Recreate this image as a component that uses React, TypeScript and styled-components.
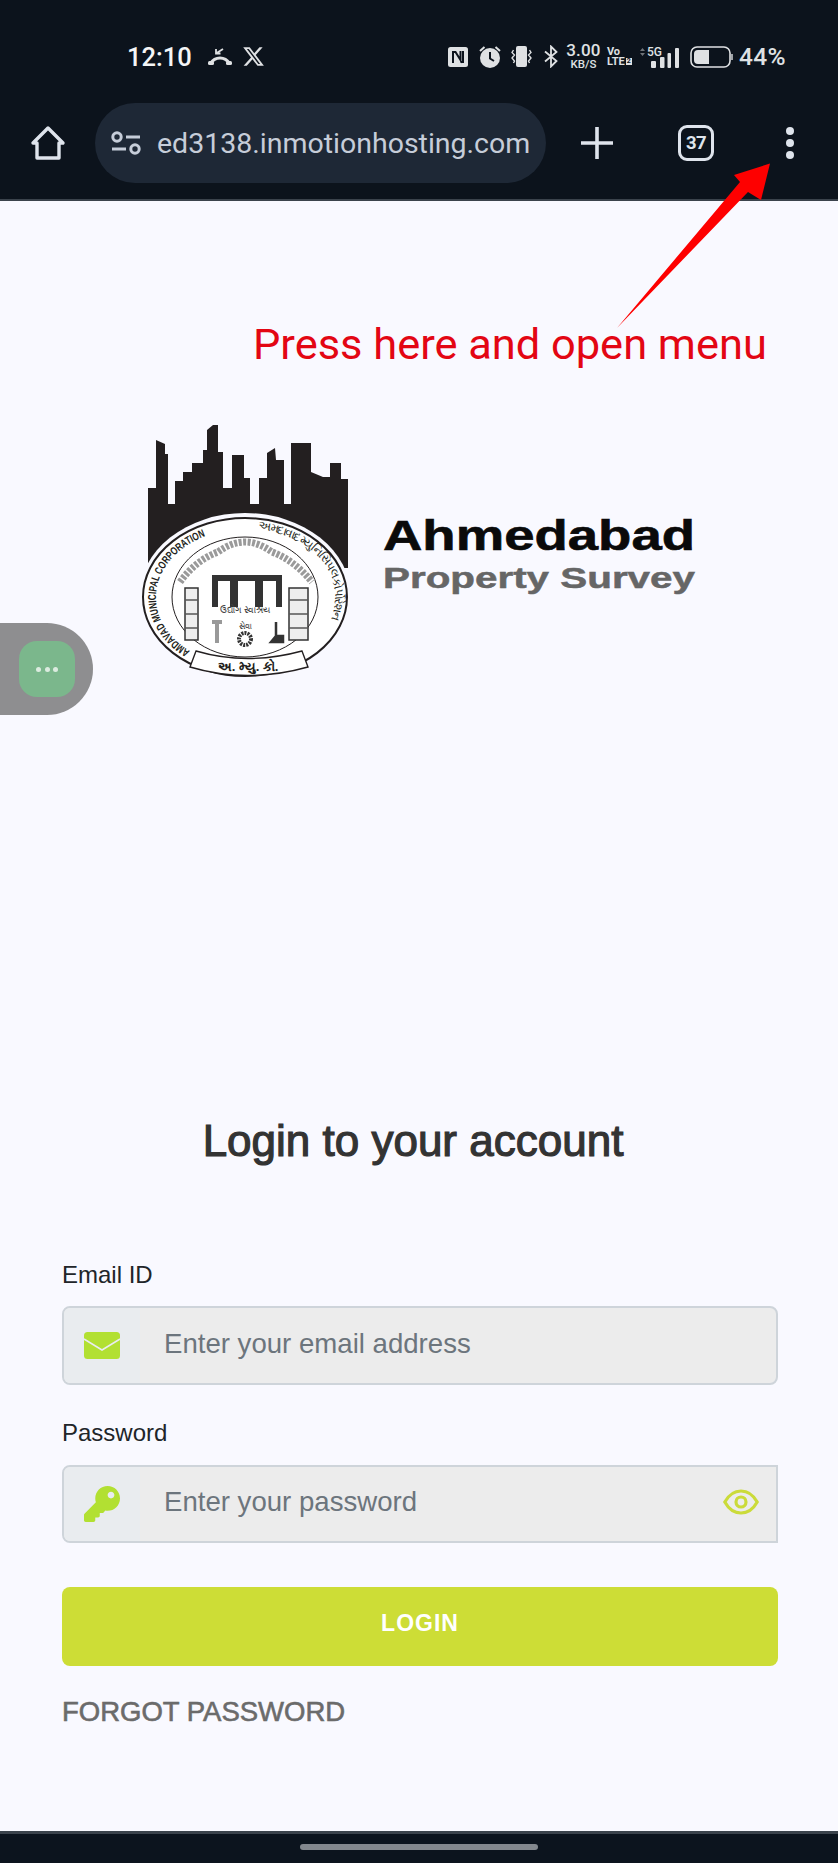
import React from "react";
import styled, { createGlobalStyle } from "styled-components";
import { FaKey } from "react-icons/fa";
import { FaXTwitter } from "react-icons/fa6";

const GlobalStyle = createGlobalStyle`
  html, body { margin: 0; padding: 0; background: #f9f9ff; }
  * { box-sizing: border-box; }
  input::placeholder { color: #6c757d; opacity: 1; }
`;

const Screen = styled.div`
  position: relative;
  width: 838px;
  height: 1863px;
  display: flex;
  flex-direction: column;
  overflow: hidden;
  background: #f9f9ff;
  font-family: "Liberation Sans", Arial, sans-serif;
`;

/* browser chrome */
const Chrome = styled.header`
  height: 201px;
  flex: none;
  background: #0c131c;
  border-bottom: 2px solid #3b434c;
  font-family: Roboto, sans-serif;
`;

const StatusBar = styled.div`
  height: 103px;
  padding: 10px 52px 0 127px;
  display: flex;
  align-items: center;
  justify-content: space-between;
  color: #fff;
`;

const StatusGroup = styled.div`
  display: flex;
  align-items: center;
`;

const Clock = styled.span`
  font-size: 25.5px;
  font-weight: 500;
  color: #f4f5f6;
`;

const StatusSlot = styled.span<{ $left: number }>`
  display: flex;
  margin-left: ${(p) => p.$left}px;
  color: #dfe1e3;
`;

const Speed = styled.span`
  width: 33px;
  display: flex;
  flex-direction: column;
  align-items: center;
  font-weight: 500;
  line-height: 1;
  .value { font-size: 17px; letter-spacing: 0.2px; }
  .unit { font-size: 11.5px; }
`;

const Volte = styled.span`
  width: 24px;
  display: flex;
  flex-direction: column;
  font-size: 11px;
  font-weight: 700;
  line-height: 10px;
  .row { display: flex; align-items: center; gap: 1px; }
  .sim { font-size: 7px; line-height: 7px; padding: 0 1px; background: #dfe1e3; color: #0c131c; }
`;

const Percent = styled.span`
  font-size: 24.5px;
  font-weight: 500;
  letter-spacing: 0.4px;
  color: #dfe1e3;
`;

const Toolbar = styled.div`
  height: 80px;
  padding-left: 30px;
  display: flex;
  align-items: center;
  color: #dfe4ec;
`;

const ToolSlot = styled.span<{ $left: number }>`
  display: flex;
  margin-left: ${(p) => p.$left}px;
`;

const AddressPill = styled.div`
  width: 451px;
  height: 80px;
  margin-left: 29px;
  padding-left: 16px;
  display: flex;
  align-items: center;
  gap: 16px;
  border-radius: 40px;
  background: #1e2836;
  color: #c6cdd9;
  font-size: 28.5px;
`;

const TabCount = styled.span`
  width: 36px;
  height: 36px;
  margin-left: 65px;
  display: flex;
  align-items: center;
  justify-content: center;
  border: 3.5px solid #dfe4ec;
  border-radius: 9px;
  font-size: 18.5px;
  font-weight: 700;
  letter-spacing: -0.6px;
`;

/* overlays */
const PointerArrow = styled.svg`
  position: absolute;
  left: 600px;
  top: 150px;
`;

const FloatingDock = styled.div`
  position: absolute;
  left: 0;
  top: 623px;
  width: 93px;
  height: 92px;
  display: flex;
  align-items: center;
  padding-left: 19px;
  border-radius: 0 46px 46px 0;
  background: #8e8e90;
`;

const DockButton = styled.div`
  width: 56px;
  height: 56px;
  display: flex;
  align-items: center;
  justify-content: center;
  gap: 3.5px;
  border-radius: 18px;
  background: #7bb78c;
`;

const DockDot = styled.span`
  width: 5px;
  height: 5px;
  border-radius: 50%;
  background: #dcebe0;
`;

/* page */
const Main = styled.main`
  flex: 1;
  padding: 120px 60px 0 62px;
  display: flex;
  flex-direction: column;
`;

const Notice = styled.div`
  width: 100%;
  padding-left: 191px;
  font-family: Roboto, sans-serif;
  font-size: 43.4px;
  line-height: 48px;
  color: #e30613;
  white-space: nowrap;
`;

const LogoArt = styled.svg`
  display: block;
  flex: none;
  margin: 41px 0 0 68px;
`;

const Title = styled.h1`
  margin: 426px 14px 0 0;
  text-align: center;
  font-size: 44px;
  line-height: 50px;
  font-weight: 400;
  color: #333;
  -webkit-text-stroke: 1.2px #333;
`;

const Label = styled.label<{ $top: number }>`
  display: block;
  margin-top: ${(p) => p.$top}px;
  font-size: 24px;
  line-height: 28px;
  color: #212529;
`;

const InputGroup = styled.div<{ $top: number; $height: number; $square?: boolean }>`
  height: ${(p) => p.$height}px;
  margin-top: ${(p) => p.$top}px;
  display: flex;
  align-items: stretch;
  overflow: hidden;
  background: #ececec;
  border: 2px solid #ced4da;
  border-radius: ${(p) => (p.$square ? "8px 0 0 8px" : "8px")};
`;

const Addon = styled.span`
  width: 76px;
  flex: none;
  display: flex;
  align-items: center;
  justify-content: center;
  background: #e9ecef;
  color: #b2e032;
`;

const Field = styled.input`
  flex: 1;
  min-width: 0;
  padding: 0 0 4px 24px;
  border: 0;
  outline: 0;
  background: transparent;
  font-family: "Liberation Sans", Arial, sans-serif;
  font-size: 27.6px;
  color: #212529;
`;

const EyeToggle = styled.span`
  flex: none;
  display: flex;
  align-items: center;
  padding: 0 17px 4px 0;
  color: #cbdb3a;
`;

const LoginButton = styled.button`
  height: 79px;
  margin-top: 44px;
  padding: 0 0 6px;
  border: 0;
  border-radius: 8px;
  background: #cddd36;
  color: #fff;
  font-family: "Liberation Sans", Arial, sans-serif;
  font-size: 23px;
  font-weight: 700;
  letter-spacing: 1px;
`;

const ForgotLink = styled.a`
  margin-top: 31px;
  font-size: 27.5px;
  line-height: 30px;
  color: #6b6b6b;
  -webkit-text-stroke: 0.6px #6b6b6b;
`;

const BottomBar = styled.footer`
  height: 32px;
  flex: none;
  display: flex;
  justify-content: center;
  padding-top: 10px;
  background: #0c141e;
  border-top: 3px solid #3b434c;
`;

const HomeHandle = styled.span`
  width: 238px;
  height: 6px;
  border-radius: 3px;
  background: #83888e;
`;

const MissedCall = () => (
  <svg width="24" height="18" viewBox="0 0 24 18" fill="none">
    <path d="M2.5 15.5C5 11.5 8 10 12 10s7 1.500 9.500 5.500" stroke="currentColor" strokeWidth="3" />
    <rect x="0" y="13" width="6" height="4" rx="1.500" fill="currentColor" />
    <rect x="18" y="13" width="6" height="4" rx="1.500" fill="currentColor" />
    <path d="M8 1v4.500h4.500M8.300 5.300 15 1" stroke="currentColor" strokeWidth="1.800" />
  </svg>
);

const NfcIcon = () => (
  <svg width="20" height="20" viewBox="0 0 20 20">
    <rect width="20" height="20" rx="2.500" fill="currentColor" />
    <path d="M5 16V5h2.500l5 8V4" fill="none" stroke="#0c131c" strokeWidth="2" />
    <path d="M15 4v11h-2.500" fill="none" stroke="#0c131c" strokeWidth="2" />
  </svg>
);

const AlarmIcon = () => (
  <svg width="22" height="23" viewBox="0 0 22 23">
    <circle cx="11" cy="13" r="10" fill="currentColor" />
    <path d="M11 7v6.500l4 2.500" fill="none" stroke="#0c131c" strokeWidth="2" />
    <path d="M1 6l4.500-4M21 6l-4.500-4" fill="none" stroke="currentColor" strokeWidth="2" />
  </svg>
);

const VibrateIcon = () => (
  <svg width="21" height="21" viewBox="0 0 21 21">
    <rect x="5" y="0" width="11" height="21" rx="2" fill="currentColor" />
    <path d="M2.500 4 1 6.500l2.500 2.500L1 12l2.500 3-1 2M18.500 4 20 6.500 17.500 9 20 12l-2.500 3 1 2" fill="none" stroke="currentColor" strokeWidth="1.400" />
  </svg>
);

const BluetoothIcon = () => (
  <svg width="14" height="23" viewBox="0 0 14 23" fill="none">
    <path d="M1 6.500 12.500 16 7 21.500v-20L12.500 7 1 16.500" stroke="currentColor" strokeWidth="1.800" />
  </svg>
);

const SignalIcon = () => (
  <svg width="39" height="23" viewBox="0 -2 39 23">
    <path d="M0 4 2.500 1 5 4zM0 6l2.500 3L5 6z" fill="#6f7479" />
    <text x="7" y="9" fontFamily="Roboto, sans-serif" fontSize="12" fontWeight="500" fill="currentColor">5G</text>
    <rect x="11" y="14" width="5" height="7" rx="1" fill="currentColor" />
    <rect x="20" y="10" width="4.500" height="11" rx="1" fill="currentColor" />
    <rect x="27.500" y="6" width="3.500" height="15" rx="1" fill="currentColor" />
    <rect x="35" y="1" width="4" height="20" rx="1" fill="currentColor" />
  </svg>
);

const BatteryIcon = () => (
  <svg width="43" height="22" viewBox="0 0 43 22">
    <rect x="1" y="1" width="39" height="20" rx="6" fill="none" stroke="currentColor" strokeWidth="1.600" />
    <path d="M8 4h11v14H8a4 4 0 0 1-4-4V8a4 4 0 0 1 4-4z" fill="currentColor" />
    <path d="M42 8v6" stroke="currentColor" strokeWidth="1.400" />
  </svg>
);

const HomeIcon = () => (
  <svg width="36" height="36" viewBox="0 0 36 36" fill="none">
    <path d="M3 18 18 3l15 15h-4v15H7V18z" stroke="currentColor" strokeWidth="3.400" strokeLinejoin="round" />
  </svg>
);

const TuneIcon = () => (
  <svg width="30" height="24" viewBox="0 0 30 24" fill="none" stroke="currentColor" strokeWidth="3">
    <circle cx="6" cy="6" r="4.200" />
    <path d="M15 6h14M1 18h14" />
    <circle cx="24" cy="18" r="4.200" />
  </svg>
);

const PlusIcon = () => (
  <svg width="32" height="32" viewBox="0 0 32 32">
    <path d="M16 0v32M0 16h32" stroke="currentColor" strokeWidth="3.600" />
  </svg>
);

const MenuDots = () => (
  <svg width="12" height="34" viewBox="0 0 12 34" fill="currentColor">
    <circle cx="6" cy="5" r="4" />
    <circle cx="6" cy="17" r="4" />
    <circle cx="6" cy="29" r="4" />
  </svg>
);

const EnvelopeIcon = () => (
  <svg width="36" height="27" viewBox="0 0 36 27">
    <rect width="36" height="27" rx="3.500" fill="currentColor" />
    <path d="M0 7 18 18 36 7" fill="none" stroke="#e9ecef" strokeWidth="1.500" />
  </svg>
);

const EyeIcon = () => (
  <svg width="36" height="26" viewBox="0 0 36 26" fill="none" stroke="currentColor" strokeWidth="3.200">
    <path d="M1.800 13C6 5.500 11.500 2 18 2s12 3.500 16.200 11C30 20.500 24.500 24 18 24S6 20.500 1.800 13z" />
    <circle cx="18" cy="13" r="5" />
  </svg>
);

const SealAndWordmark = () => (
  <LogoArt width="580" height="280" viewBox="0 0 580 280">
    <path
      fill="#231f20"
      d="M18 158V78h8V30l9 4v10h3v50h7V71h8V62h9v-9h11V40h4V20l6-5h5v27h5v36h9V45h12v23h6v26h9V68h8V43l8-5 1 12h8v44h7V33h20v29l12 5h7V53h11v16h7v89z"
    />
    <ellipse cx="115" cy="187" rx="106" ry="84" fill="#f9f9ff" />
    <ellipse cx="115" cy="187" rx="102" ry="79" fill="#fff" stroke="#231f20" strokeWidth="2" />
    <ellipse cx="115" cy="187" rx="73" ry="60" fill="#fff" stroke="#231f20" strokeWidth="1" />
    <defs>
      <path id="sealLeft" d="M60 241A88 68 0 0 1 107 119.500" />
      <path id="sealRight" d="M128 119.500A88 68 0 0 1 182 233" />
    </defs>
    <text fontSize="11" fontWeight="700" fill="#231f20" fontFamily="'Liberation Sans', sans-serif">
      <textPath href="#sealLeft" textLength="150" lengthAdjust="spacingAndGlyphs">
        AMDAVAD MUNICIPAL CORPORATION
      </textPath>
    </text>
    <text fontSize="12" fill="#231f20" fontFamily="'Noto Sans', sans-serif">
      <textPath href="#sealRight" textLength="135">
        અમદાવાદ મ્યુનિસિપલ કોર્પોરેશન
      </textPath>
    </text>
    <path d="M50 172Q66 150 88 142Q115 122 142 142Q164 150 182 172" fill="none" stroke="#9a9a9a" strokeWidth="7" strokeDasharray="3 1.500" />
    <path d="M55 178h13v52H55zM159 178h19v52h-19z" fill="#eee" stroke="#333" strokeWidth="1.500" />
    <path d="M55 190h13M55 204h13M55 218h13M159 190h19M159 204h19M159 218h19" stroke="#555" strokeWidth="1.500" />
    <path d="M82 165h70v6H82zM82 171h6v26h-6zM100 171h8v26h-8zM125 171h8v26h-8zM146 171h6v26h-6z" fill="#333" />
    <text x="115" y="203" textAnchor="middle" fontSize="9" fill="#444" fontFamily="'Noto Sans', sans-serif">ઉદ્યોગ સ્વાશ્રય</text>
    <text x="115" y="219" textAnchor="middle" fontSize="7.500" fill="#444" fontFamily="'Noto Sans', sans-serif">સેવા</text>
    <circle cx="115" cy="229" r="6" fill="none" stroke="#333" strokeWidth="4" strokeDasharray="2 1" />
    <path d="M87 212v21M82 212h10" stroke="#999" strokeWidth="4" />
    <path d="M146 212v14M141 232l5-6h7v6z" stroke="#333" strokeWidth="2.500" fill="#333" />
    <path d="M66 241Q117 256 172 241L178 257Q117 274 60 257Z" fill="#fff" stroke="#231f20" strokeWidth="1.400" />
    <text x="118" y="261" textAnchor="middle" fontSize="13" fontWeight="700" fill="#231f20" fontFamily="'Noto Sans', sans-serif">અ. મ્યુ. કો.</text>
    <text x="253" y="140" textLength="312" lengthAdjust="spacingAndGlyphs" fontFamily="'Liberation Sans', sans-serif" fontSize="42" fontWeight="700" fill="#0a0a0a" stroke="#0a0a0a" strokeWidth="0.6">
      Ahmedabad
    </text>
    <text x="253" y="178" textLength="312" lengthAdjust="spacingAndGlyphs" fontFamily="'Liberation Sans', sans-serif" fontSize="29" fontWeight="700" fill="#666" stroke="#666" strokeWidth="0.5">
      Property Survey
    </text>
  </LogoArt>
);

export default function App() {
  return (
    <Screen>
      <GlobalStyle />
      <Chrome>
        <StatusBar>
          <StatusGroup>
            <Clock>12:10</Clock>
            <StatusSlot $left={16}><MissedCall /></StatusSlot>
            <StatusSlot $left={10}><FaXTwitter size={23} /></StatusSlot>
          </StatusGroup>
          <StatusGroup>
            <StatusSlot $left={0}><NfcIcon /></StatusSlot>
            <StatusSlot $left={11}><AlarmIcon /></StatusSlot>
            <StatusSlot $left={10}><VibrateIcon /></StatusSlot>
            <StatusSlot $left={12}><BluetoothIcon /></StatusSlot>
            <StatusSlot $left={9}>
              <Speed>
                <span className="value">3.00</span>
                <span className="unit">KB/S</span>
              </Speed>
            </StatusSlot>
            <StatusSlot $left={7}>
              <Volte>
                <span>Vo</span>
                <span className="row">LTE<span className="sim">2</span></span>
              </Volte>
            </StatusSlot>
            <StatusSlot $left={9}><SignalIcon /></StatusSlot>
            <StatusSlot $left={11}><BatteryIcon /></StatusSlot>
            <StatusSlot $left={6}><Percent>44%</Percent></StatusSlot>
          </StatusGroup>
        </StatusBar>
        <Toolbar>
          <HomeIcon />
          <AddressPill>
            <TuneIcon />
            <span>ed3138.inmotionhosting.com</span>
          </AddressPill>
          <ToolSlot $left={35}><PlusIcon /></ToolSlot>
          <TabCount>37</TabCount>
          <ToolSlot $left={70}><MenuDots /></ToolSlot>
        </Toolbar>
      </Chrome>

      <Main>
        <Notice>Press here and open menu</Notice>
        <SealAndWordmark />
        <Title>Login to your account</Title>
        <Label $top={95}>Email ID</Label>
        <InputGroup $top={17} $height={79}>
          <Addon><EnvelopeIcon /></Addon>
          <Field placeholder="Enter your email address" />
        </InputGroup>
        <Label $top={34}>Password</Label>
        <InputGroup $top={18} $height={78} $square>
          <Addon><FaKey size={36} /></Addon>
          <Field type="password" placeholder="Enter your password" />
          <EyeToggle><EyeIcon /></EyeToggle>
        </InputGroup>
        <LoginButton>LOGIN</LoginButton>
        <ForgotLink>FORGOT PASSWORD</ForgotLink>
      </Main>

      <BottomBar>
        <HomeHandle />
      </BottomBar>

      <PointerArrow width="200" height="190" viewBox="600 150 200 190">
        <path d="M770 163.500 734 175 740 182 617 328 748 192 761 200z" fill="#fe0000" />
      </PointerArrow>
      <FloatingDock>
        <DockButton>
          <DockDot />
          <DockDot />
          <DockDot />
        </DockButton>
      </FloatingDock>
    </Screen>
  );
}
